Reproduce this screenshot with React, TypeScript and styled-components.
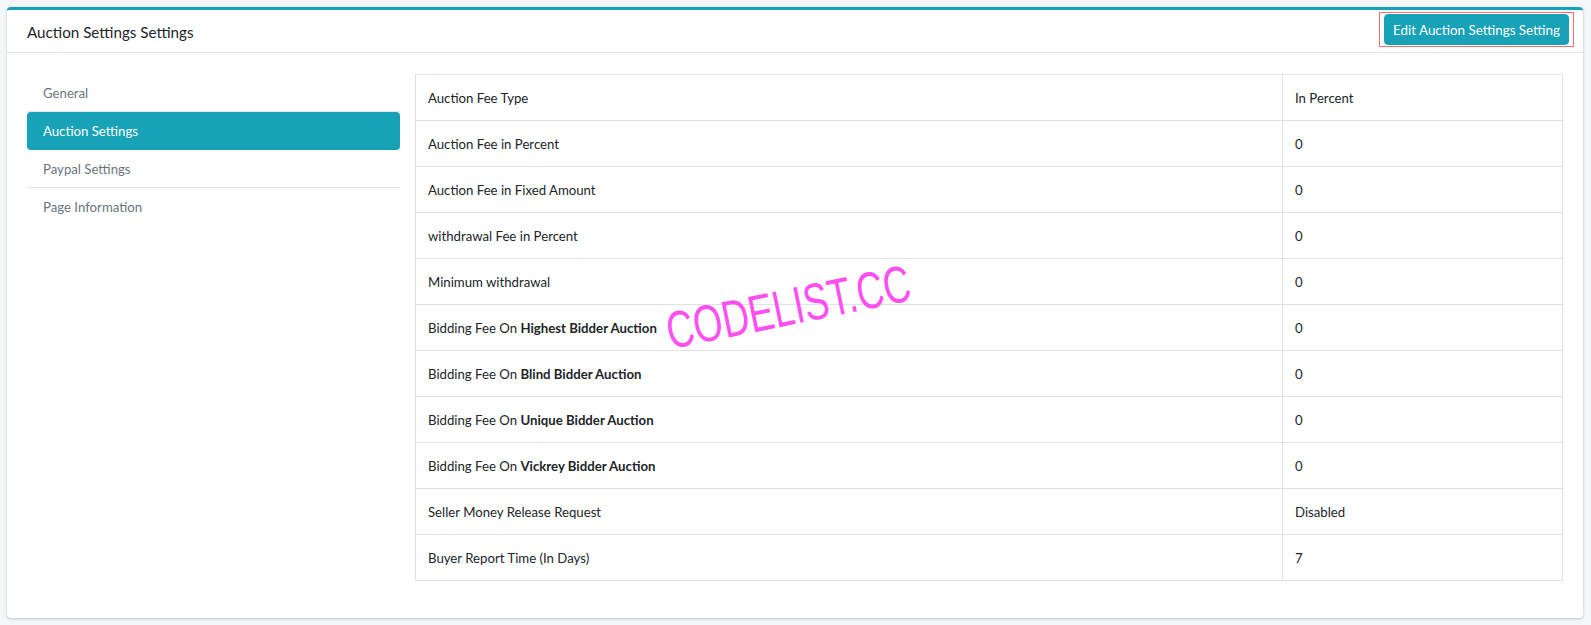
import React from 'react';
import styled, { createGlobalStyle } from 'styled-components';

// ─── Global ───────────────────────────────────────────────────────────────────

const GlobalStyle = createGlobalStyle`
  html, body {
    margin: 0;
    padding: 0;
    background: #f4f6f9;
    font-family: Lato, "Noto Sans", "Liberation Sans", sans-serif;
    font-size: 13.2px;
    color: #212529;
  }
  * { box-sizing: border-box; }
`;

// ─── Styled components ────────────────────────────────────────────────────────

const Page = styled.div`
  padding: 7px 8px 8px 7px;
`;

const Card = styled.div`
  position: relative;
  background: #fff;
  border-top: 3px solid #17a2b8;
  border-radius: 4px;
  box-shadow: 0 0 1px rgba(0, 0, 0, 0.13), 0 1px 3px rgba(0, 0, 0, 0.2);
`;

const CardHeader = styled.div`
  display: flex;
  align-items: flex-start;
  justify-content: space-between;
  height: 43px;
  padding: 2px 9px 0 20px;
  border-bottom: 1px solid #dfe2e6;
`;

const CardTitle = styled.h3`
  margin: 0;
  font-size: 15.2px;
  font-weight: 400;
  line-height: 41px;
  color: #212529;
`;

const Highlight = styled.div`
  border: 1px solid #f26f6f;
  padding: 1px 4px;
`;

const Button = styled.button`
  display: block;
  height: 31px;
  padding: 1px 8px 0;
  border: 1px solid #17a2b8;
  border-radius: 4px;
  background: #17a2b8;
  color: #fff;
  font-family: inherit;
  font-size: 13.4px;
  cursor: pointer;
`;

const CardBody = styled.div`
  display: grid;
  grid-template-columns: 373px 1fr;
  column-gap: 15px;
  align-items: start;
  padding: 21px 20px 37px 20px;
`;

const Nav = styled.ul`
  list-style: none;
  margin: 0;
  padding: 0;
`;

const NavItem = styled.li<{ $active?: boolean }>`
  padding: 9px 16px 7px;
  line-height: 21px;
  border-radius: ${({ $active }) => ($active ? '4px' : '0')};
  border-bottom: 1px solid ${({ $active }) => ($active ? 'transparent' : '#e3e5e8')};
  background: ${({ $active }) => ($active ? '#17a2b8' : 'transparent')};
  color: ${({ $active }) => ($active ? '#fff' : '#6c757d')};
  cursor: pointer;
  &:last-child { border-bottom: none; }
`;

const Table = styled.table`
  width: 100%;
  border-collapse: collapse;
`;

const Cell = styled.td<{ $value?: boolean }>`
  height: 46px;
  padding: 2px 12px 0;
  line-height: 21px;
  border: 1px solid #dee2e6;
  width: ${({ $value }) => ($value ? '280px' : 'auto')};
  color: #212529;
  b { font-weight: 700; }
`;

const Watermark = styled.div`
  position: absolute;
  left: 666px;
  top: 291px;
  font-family: "Liberation Sans", Arial, sans-serif;
  font-size: 52px;
  color: #ff4ff0;
  white-space: nowrap;
  transform: rotate(-11.5deg) scaleX(0.72);
  transform-origin: left bottom;
  pointer-events: none;
`;

// ─── Data ─────────────────────────────────────────────────────────────────────

const navItems = ['General', 'Auction Settings', 'Paypal Settings', 'Page Information'];

const rows: { label: React.ReactNode; value: string }[] = [
  { label: 'Auction Fee Type', value: 'In Percent' },
  { label: 'Auction Fee in Percent', value: '0' },
  { label: 'Auction Fee in Fixed Amount', value: '0' },
  { label: 'withdrawal Fee in Percent', value: '0' },
  { label: 'Minimum withdrawal', value: '0' },
  { label: <>Bidding Fee On <b>Highest Bidder Auction</b></>, value: '0' },
  { label: <>Bidding Fee On <b>Blind Bidder Auction</b></>, value: '0' },
  { label: <>Bidding Fee On <b>Unique Bidder Auction</b></>, value: '0' },
  { label: <>Bidding Fee On <b>Vickrey Bidder Auction</b></>, value: '0' },
  { label: 'Seller Money Release Request', value: 'Disabled' },
  { label: 'Buyer Report Time (In Days)', value: '7' },
];

// ─── Component ────────────────────────────────────────────────────────────────

export default function App() {
  return (
    <>
      <GlobalStyle />
      <Page>
        <Card>
          <CardHeader>
            <CardTitle>Auction Settings Settings</CardTitle>
            <Highlight>
              <Button>Edit Auction Settings Setting</Button>
            </Highlight>
          </CardHeader>

          <CardBody>
            <Nav>
              {navItems.map((item) => (
                <NavItem key={item} $active={item === 'Auction Settings'}>
                  {item}
                </NavItem>
              ))}
            </Nav>

            <Table>
              <tbody>
                {rows.map((r, i) => (
                  <tr key={i}>
                    <Cell>{r.label}</Cell>
                    <Cell $value>{r.value}</Cell>
                  </tr>
                ))}
              </tbody>
            </Table>
          </CardBody>

          <Watermark>CODELIST.CC</Watermark>
        </Card>
      </Page>
    </>
  );
}
